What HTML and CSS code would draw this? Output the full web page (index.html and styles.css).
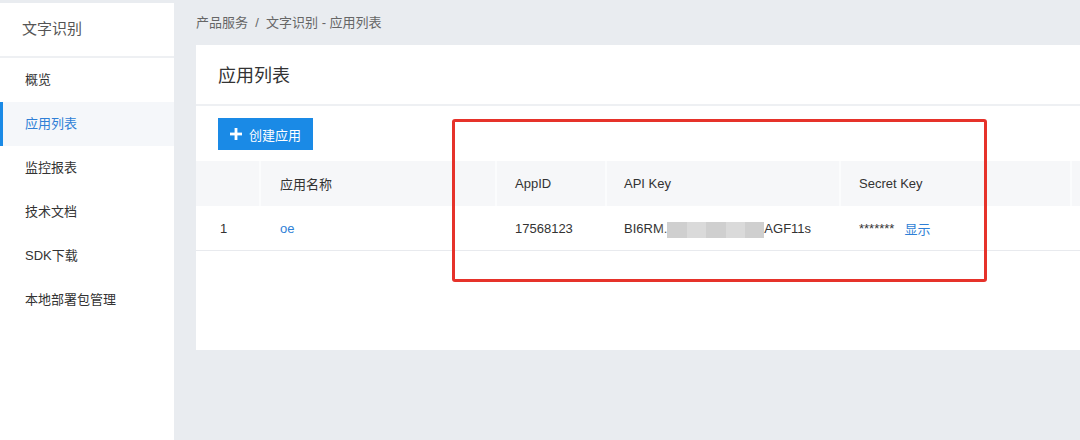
FILE: index.html
```html
<!DOCTYPE html>
<html lang="zh-CN">
<head>
<meta charset="utf-8">
<title>应用列表</title>
<link rel="stylesheet" href="styles.css">
</head>
<body>
<div class="layout">
  <aside class="sidebar">
    <div class="side-title">文字识别</div>
    <nav class="menu">
      <div class="menu-item">概览</div>
      <div class="menu-item active">应用列表</div>
      <div class="menu-item">监控报表</div>
      <div class="menu-item">技术文档</div>
      <div class="menu-item">SDK下载</div>
      <div class="menu-item">本地部署包管理</div>
    </nav>
  </aside>
  <main class="main">
    <div class="crumb">产品服务 &nbsp;/&nbsp; 文字识别 - 应用列表</div>
    <section class="card">
      <div class="card-head">应用列表</div>
      <div class="toolbar">
        <button class="btn-primary"><svg class="plus" viewBox="0 0 12 12" width="12" height="12"><rect x="4.6" y="0" width="2.8" height="12" fill="#fff"/><rect x="0" y="4.6" width="12" height="2.8" fill="#fff"/></svg>创建应用</button>
      </div>
      <div class="table">
        <div class="row head">
          <div class="cell c1"></div>
          <div class="cell c2">应用名称</div>
          <div class="cell c3">AppID</div>
          <div class="cell c4">API Key</div>
          <div class="cell c5">Secret Key</div>
          <div class="cell c6"></div>
        </div>
        <div class="row body">
          <div class="cell c1 idx">1</div>
          <div class="cell c2"><span class="link">oe</span></div>
          <div class="cell c3">17568123</div>
          <div class="cell c4">BI6RM.<span class="blur"><i></i><i></i><i></i><i></i><i></i></span>AGF11s</div>
          <div class="cell c5"><span class="stars">*******</span><span class="link show">显示</span></div>
          <div class="cell c6"></div>
        </div>
      </div>
    </section>
  </main>
</div>
<div class="mark"></div>
</body>
</html>
```
FILE: styles.css
```css
html, body {
  margin: 0;
  padding: 0;
}
body {
  background: #e9ecf0;
  font-family: "Liberation Sans", "Noto Sans CJK SC", Arial, sans-serif;
  color: #333;
  font-size: 13px;
  width: 1080px;
  height: 440px;
  overflow: hidden;
  position: relative;
}
.layout {
  display: flex;
  padding-top: 3px;
  height: 437px;
}
.sidebar {
  width: 174px;
  flex: none;
  background: #fff;
}
.side-title {
  height: 53px;
  line-height: 52px;
  padding-left: 22px;
  font-size: 15px;
  color: #555;
  border-bottom: 2px solid #eef0f3;
}
.menu-item {
  height: 44px;
  line-height: 44px;
  padding-left: 25px;
  color: #333;
  position: relative;
}
.menu-item.active {
  background: #f5f7fa;
  color: #2f7fd6;
}
.menu-item.active::before {
  content: "";
  position: absolute;
  left: 0;
  top: 0;
  bottom: 0;
  width: 3px;
  background: #1a8ae6;
}
.main {
  flex: 1;
  padding-left: 22px;
  min-width: 0;
}
.crumb {
  height: 42px;
  line-height: 40px;
  color: #666;
}
.card {
  background: #fff;
  height: 305px;
  width: 900px;
}
.card-head {
  height: 59px;
  line-height: 62px;
  padding-left: 22px;
  font-size: 18px;
  color: #333;
  border-bottom: 2px solid #eef0f3;
}
.toolbar {
  padding: 12px 0 11px 22px;
  display: flex;
}
.btn-primary {
  height: 32px;
  width: 95px;
  border: 0;
  background: #1a8ae6;
  color: #fff;
  font-family: inherit;
  font-size: 13px;
  display: flex;
  align-items: center;
  justify-content: center;
  gap: 7px;
  padding: 0;
}
.plus {
  display: block;
}
.table {
  width: 900px;
}
.row {
  display: flex;
}
.row.head {
  height: 45px;
  background: #f6f7f9;
}
.row.body {
  height: 44px;
  border-bottom: 1px solid #e8eaee;
}
.cell {
  display: flex;
  align-items: center;
  padding-left: 18px;
  box-sizing: border-box;
  white-space: nowrap;
}
.row.head .cell {
  border-right: 2px solid #fbfcfd;
}
.c1 { width: 65px; padding-left: 24px; }
.c2 { width: 236px; padding-left: 19px; }
.c3 { width: 110px; }
.c4 { width: 234px; padding-left: 17px; }
.c5 { width: 231px; }
.c6 { flex: 1; }
.link {
  color: #2f7fd6;
}
.stars {
  margin-right: 10px;
}
.blur {
  display: inline-flex;
  width: 97px;
  height: 16px;
  background: #d4d4d4;
  margin-top: 4px;
  border-radius: 2px;
  box-shadow: 0 -10px 8px 2px rgba(255,255,255,0.9);
}
.blur i {
  flex: 1;
  height: 100%;
}
.blur i:nth-child(odd) { background: #cfcfcf; }
.blur i:nth-child(even) { background: #dadada; }
.mark {
  position: absolute;
  left: 452px;
  top: 119px;
  width: 535px;
  height: 163px;
  box-sizing: border-box;
  border: 3px solid #e6322a;
  border-radius: 3px;
}
```
